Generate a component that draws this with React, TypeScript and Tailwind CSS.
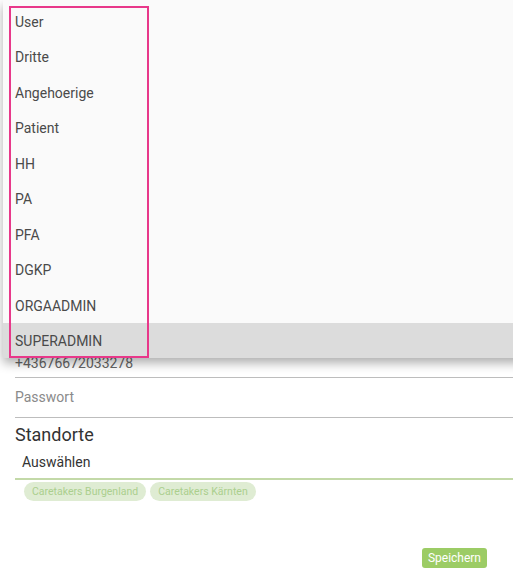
import React from 'react';

const roles = ['User', 'Dritte', 'Angehoerige', 'Patient', 'HH', 'PA', 'PFA', 'DGKP', 'ORGAADMIN', 'SUPERADMIN'];

const App = () => {
  const selected = 'SUPERADMIN';

  return (
    <div className="relative w-[513px] h-[576px] overflow-hidden bg-white font-['Roboto',sans-serif]">
      {/* form behind the open select */}
      <div className="pl-[15px]">
        <div className="h-[352px]" />
        <div className="pt-[1px] h-[26px] border-b border-[#bdbdbd] text-[14px] leading-[20px] text-[#666]">
          +43676672033278
        </div>
        <div className="pt-[9px] pb-[10px] border-b border-[#bdbdbd] text-[14px] leading-[20px] text-[#8a8a8a]">
          Passwort
        </div>
        <h3 className="mt-[5px] text-[18px] leading-[24px] text-[#333]">Standorte</h3>
        <div className="mt-[5px] pl-[7px] pb-[6px] text-[14px] leading-[20px] text-[#333] border-b-2 border-[#c3d9a8]">
          Auswählen
        </div>
        <div className="flex gap-[4px] pl-[9px] mt-[2px]">
          {['Caretakers Burgenland', 'Caretakers Kärnten'].map(c => (
            <span key={c} className="h-[19px] px-[8px] rounded-full bg-[#dfecd3] text-[#abcf8e] text-[10.5px] leading-[19px]">
              {c}
            </span>
          ))}
        </div>
        <div className="flex justify-end pr-[26px] mt-[47px]">
          <button className="h-[20px] px-[6px] rounded-[3px] bg-[#9ccc65] text-white text-[12px] leading-[20px]">
            Speichern
          </button>
        </div>
      </div>

      {/* open select menu */}
      <div className="absolute left-[3px] top-0 w-[530px] h-[358px] pt-[3px] bg-[#fafafa] shadow-[0_5px_10px_rgba(0,0,0,0.32)]">
        {roles.map(r => (
          <div
            key={r}
            className={`h-[35.5px] flex items-center pl-[12px] pt-[3px] text-[14px] text-[#4a4a4a] ${r === selected ? 'bg-[#dcdcdc]' : ''}`}
          >
            {r}
          </div>
        ))}
      </div>

      {/* highlight box */}
      <div className="absolute left-[9px] top-[6px] w-[140px] h-[352px] border-2 border-[#e8388a] pointer-events-none" />
    </div>
  );
};

export default App;
